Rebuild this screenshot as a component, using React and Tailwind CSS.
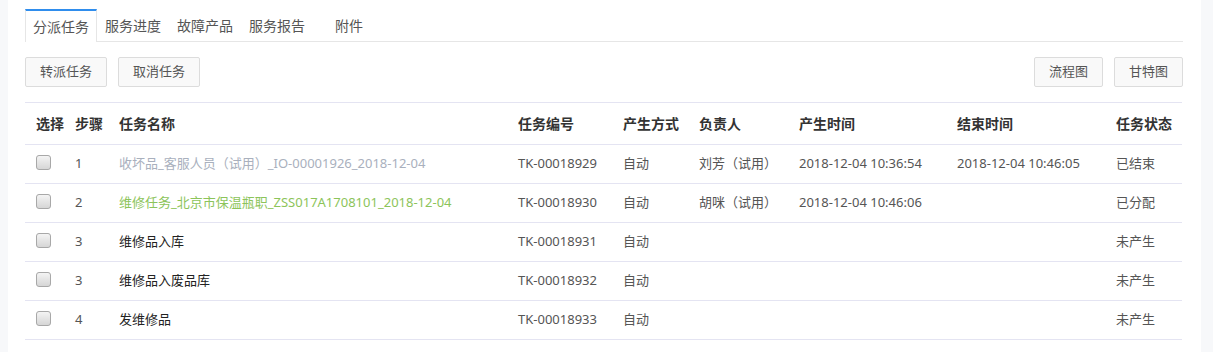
const tabs = ["分派任务", "服务进度", "故障产品", "服务报告", "附件"];

const cols = [
  { label: "选择", w: "w-[39px]" },
  { label: "步骤", w: "w-[44px]" },
  { label: "任务名称", w: "w-[399px]" },
  { label: "任务编号", w: "w-[105px]" },
  { label: "产生方式", w: "w-[76px]" },
  { label: "负责人", w: "w-[100px]" },
  { label: "产生时间", w: "w-[158px]" },
  { label: "结束时间", w: "w-[159px]" },
  { label: "任务状态", w: "w-[77px]" },
];

const rows = [
  {
    step: 1,
    name: "收坏品_客服人员（试用）_IO-00001926_2018-12-04",
    nameColor: "text-[#a9b0bd]",
    no: "TK-00018929",
    mode: "自动",
    owner: "刘芳（试用）",
    start: "2018-12-04 10:36:54",
    end: "2018-12-04 10:46:05",
    status: "已结束",
  },
  {
    step: 2,
    name: "维修任务_北京市保温瓶职_ZSS017A1708101_2018-12-04",
    nameColor: "text-[#8cc45a]",
    no: "TK-00018930",
    mode: "自动",
    owner: "胡咪（试用）",
    start: "2018-12-04 10:46:06",
    end: "",
    status: "已分配",
  },
  { step: 3, name: "维修品入库", nameColor: "text-[#222]", no: "TK-00018931", mode: "自动", owner: "", start: "", end: "", status: "未产生" },
  { step: 3, name: "维修品入废品库", nameColor: "text-[#222]", no: "TK-00018932", mode: "自动", owner: "", start: "", end: "", status: "未产生" },
  { step: 4, name: "发维修品", nameColor: "text-[#222]", no: "TK-00018933", mode: "自动", owner: "", start: "", end: "", status: "未产生" },
];

function Btn({ children }) {
  return (
    <button className="h-[30px] px-[14px] border border-[#dcdcdc] rounded-[2px] bg-[#f9f9f9] text-[13px] text-[#555]">
      {children}
    </button>
  );
}

function Check() {
  return (
    <span className="block w-[15px] h-[15px] rounded-[3px] border border-[#a8a8a8] bg-gradient-to-b from-[#f4f4f4] to-[#d6d6d6]" />
  );
}

export default function App() {
  return (
    <div
      className="w-[1213px] h-[352px] bg-[#f7f8fa] flex overflow-hidden"
      style={{ fontFamily: '"Noto Sans", "Noto Sans CJK SC", sans-serif' }}
    >
      <div className="ml-[8px] w-[1193px] bg-white pl-[17px] pr-[18px] pt-[9px]">
        {/* TABS */}
        <div className="flex border-b border-[#e6e6e6] h-[33px]">
          {tabs.map((t, i) => (
            <div
              key={t}
              className={
                i === 0
                  ? "w-[72px] h-[33px] -mb-px bg-white border-t-2 border-t-[#2f8ded] border-x border-x-[#e6e6e6] flex items-center justify-center text-[14px] text-[#555]"
                  : "w-[72px] h-[32px] flex items-center justify-center text-[14px] text-[#555]"
              }
            >
              {t}
            </div>
          ))}
        </div>

        {/* ACTIONS */}
        <div className="flex justify-between mt-[15px]">
          <div className="flex gap-[11px]">
            <Btn>转派任务</Btn>
            <Btn>取消任务</Btn>
          </div>
          <div className="flex gap-[11px]">
            <Btn>流程图</Btn>
            <Btn>甘特图</Btn>
          </div>
        </div>

        {/* TABLE */}
        <table className="mt-[15px] w-[1157px] table-fixed border-collapse text-[13px]">
          <thead>
            <tr className="border-y border-[#e4e4f2] h-[42px]">
              {cols.map((c) => (
                <th key={c.label} className={`${c.w} pl-[11px] text-left text-[14px] font-bold text-[#333] whitespace-nowrap`}>
                  {c.label}
                </th>
              ))}
            </tr>
          </thead>
          <tbody>
            {rows.map((r, i) => (
              <tr key={i} className="border-b border-[#e4e4f2] h-[39px] text-[#555]">
                <td className="pl-[11px]">
                  <div className="-mt-[4px]">
                    <Check />
                  </div>
                </td>
                <td className="pl-[11px]">{r.step}</td>
                <td className={`pl-[11px] whitespace-nowrap ${r.nameColor}`}>{r.name}</td>
                <td className="pl-[11px] whitespace-nowrap">{r.no}</td>
                <td className="pl-[11px]">{r.mode}</td>
                <td className="pl-[11px] whitespace-nowrap">{r.owner}</td>
                <td className="pl-[11px] whitespace-nowrap">{r.start}</td>
                <td className="pl-[11px] whitespace-nowrap">{r.end}</td>
                <td className="pl-[11px]">{r.status}</td>
              </tr>
            ))}
          </tbody>
        </table>
      </div>
    </div>
  );
}
